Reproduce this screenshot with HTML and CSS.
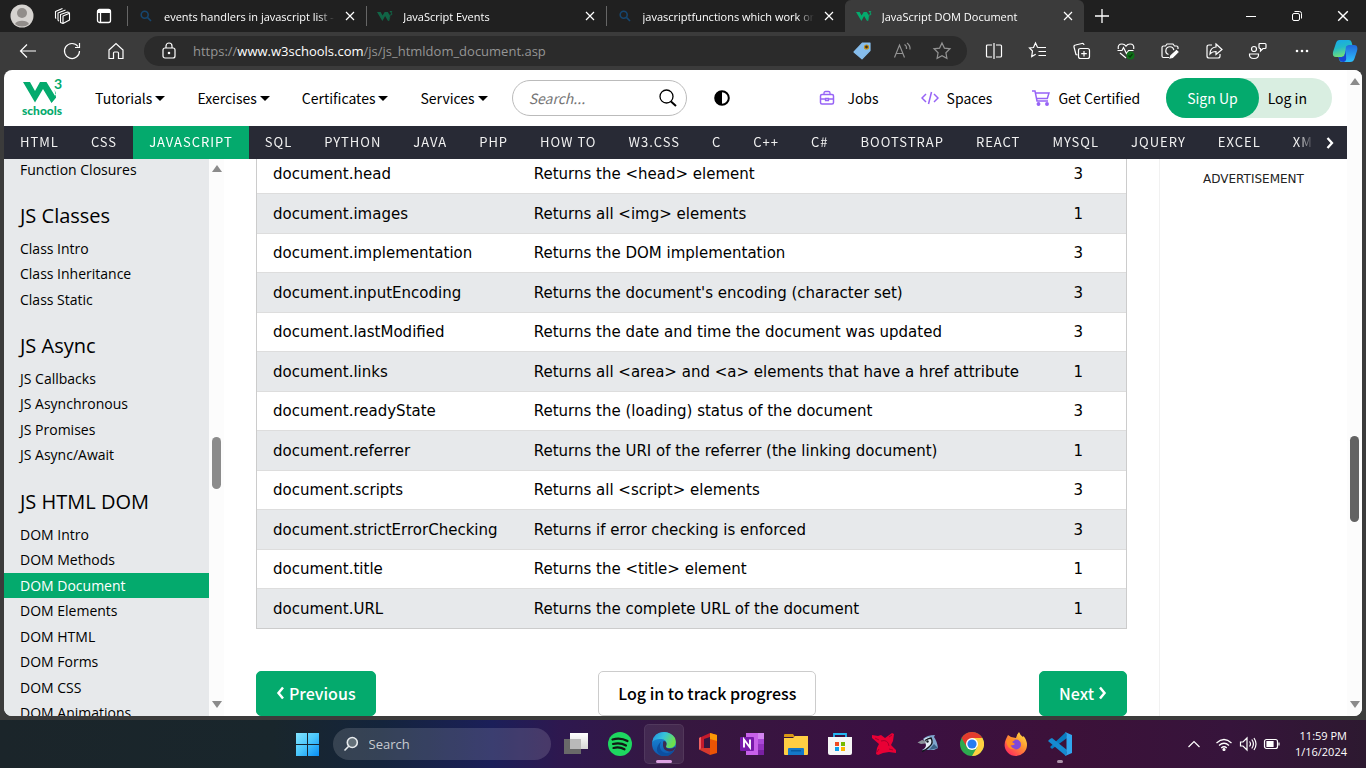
FILE: index.html
```html
<!DOCTYPE html>
<html lang="en">
<head>
<meta charset="utf-8">
<title>JavaScript DOM Document</title>
<link rel="stylesheet" href="styles.css">
</head>
<body>
<svg class="defs" aria-hidden="true">
  <symbol id="w3" viewBox="0 0 16 12"><path d="M0 2h3.600l2 3.600L7.700 2h3.100l2.400 3.900-2.300 4.800-2.800-4.600-2.700 4.900zM10.900 10.700l2.700-4.600-1.500 4.900z"/><path d="M12.800 1.500h2l-1 1.500q1.500.3 1 1.500-.8 1-2 .3" fill="none" stroke="currentColor"/></symbol>
  <symbol id="lens" viewBox="0 0 12 12"><g fill="none" stroke="currentColor" stroke-width="1.600"><circle cx="4.700" cy="4.700" r="3.500"/><path d="M7.400 7.400 11 11"/></g></symbol>
  <symbol id="x" viewBox="0 0 10 10"><path d="M1 1l8 8M9 1 1 9" fill="none" stroke="currentColor" stroke-width="1.200"/></symbol>
</svg>

<header class="tabbar">
  <div class="tab-tools">
    <button class="avatar" aria-label="Profile"><svg width="24" height="24" viewBox="0 0 24 24"><circle cx="12" cy="12" r="11.500" fill="#d6d3d0"/><circle cx="12" cy="9" r="5" fill="#918d8a"/><path d="M5 20a7.500 5 0 0 1 14 0 11 11 0 0 1-14 0z" fill="#918d8a"/></svg></button>
    <button aria-label="Workspaces"><svg width="18" height="18" viewBox="0 0 18 18" fill="none" stroke="#fff" stroke-width="1.100" stroke-linejoin="round"><path d="M6.500 7.500 13.500 5q2 0 2 1.500v6.500L9 16.500l-2.500-1zM9 16.500V9l6.500-2.700M4 13.500V6l7.500-3M4 13.500l1 .5M1.500 11V4.500L8.500 1.500M1.500 11l.7.500"/></svg></button>
    <button aria-label="Tab actions"><svg width="16" height="16" viewBox="0 0 16 16" fill="none" stroke="#fff" stroke-width="1.300"><rect x="1.500" y="1.500" width="13" height="13" rx="2"/><path d="M1.500 3.500h13" stroke-width="3"/><path d="M4.500 4v10.500"/></svg></button>
  </div>
  <nav class="tabs" aria-label="Open tabs">
    <div class="tab"><svg class="fav lens"><use href="#lens"/></svg><a href="#">events handlers in javascript list - Search</a><button aria-label="Close tab"><svg><use href="#x"/></svg></button></div>
    <div class="tab"><svg class="fav dim"><use href="#w3"/></svg><a href="#">JavaScript Events</a><button aria-label="Close tab"><svg><use href="#x"/></svg></button></div>
    <div class="tab"><svg class="fav lens"><use href="#lens"/></svg><a href="#">javascriptfunctions which work on document</a><button aria-label="Close tab"><svg><use href="#x"/></svg></button></div>
    <div class="tab active"><svg class="fav"><use href="#w3"/></svg><a href="#">JavaScript DOM Document</a><button aria-label="Close tab"><svg><use href="#x"/></svg></button></div>
  </nav>
  <button class="new-tab" aria-label="New tab"><svg width="16" height="16" viewBox="0 0 16 16"><path d="M8 1v14M1 8h14" stroke="#fff" stroke-width="1.300"/></svg></button>
  <div class="window-buttons">
    <button aria-label="Minimize"><svg width="12" height="12" viewBox="0 0 12 12"><path d="M1 6.500h10" stroke="#fff"/></svg></button>
    <button aria-label="Restore"><svg width="12" height="12" viewBox="0 0 12 12" fill="none" stroke="#fff"><rect x="1.500" y="3.500" width="7" height="7" rx="1.500"/><path d="M3.500 1.500h5a2 2 0 0 1 2 2v5"/></svg></button>
    <button aria-label="Close"><svg width="12" height="12"><use href="#x"/></svg></button>
  </div>
</header>

<div class="toolbar">
  <div class="nav-buttons">
    <button aria-label="Back"><svg viewBox="0 0 20 20"><path d="M18 10H3M9 3.500 2.500 10 9 16.500"/></svg></button>
    <button aria-label="Refresh"><svg viewBox="0 0 20 20"><path d="M16 5.500A7.500 7.500 0 1 0 17.500 10M17.500 2v4.500H13"/></svg></button>
    <button aria-label="Home"><svg viewBox="0 0 20 20"><path d="M3 9l7-6.500L17 9v8.500h-4.500V12a1 1 0 0 0-1-1h-3a1 1 0 0 0-1 1v5.500H3z"/></svg></button>
  </div>
  <div class="address">
    <button aria-label="Site information"><svg viewBox="0 0 20 20"><rect x="4" y="7" width="12" height="10" rx="2"/><path d="M7 7V5a3 3 0 0 1 6 0v2"/><circle cx="10" cy="12" r=".7" fill="#fff"/></svg></button>
    <div class="url" role="textbox" aria-label="Address">https://<b>www.w3schools.com</b>/js/js_htmldom_document.asp</div>
    <button aria-label="Shopping"><svg viewBox="0 0 20 20"><path d="M10.500 2H18v7.500l-8 8.300L2 11z" fill="#86bdec" stroke="#86bdec" stroke-linejoin="round"/><circle cx="14.500" cy="6" r="2" fill="#3c3220" stroke="#c79012" stroke-width="1.200"/></svg></button>
    <button class="muted" aria-label="Read aloud"><svg viewBox="0 0 20 20"><path d="M2.500 16.500 7.500 4l5 12.500M4.300 12.500h6.500M12.500 3.500q2.500 1.500 2 4.500M15 2q3.500 2.500 3 6.500"/></svg></button>
    <button class="muted" aria-label="Favorite"><svg viewBox="0 0 20 20"><path d="m10 2 2.400 5.100 5.600.7-4.100 3.900 1 5.600L10 14.600l-4.900 2.700 1-5.600L2 7.800l5.600-.7z"/></svg></button>
  </div>
  <div class="extras">
    <button aria-label="Split screen"><svg viewBox="0 0 20 20"><path d="M8 4H3.500Q2.500 4 2.500 5v10q0 1 1 1H8M12 4h4.500q1 0 1 1v10q0 1-1 1H12M10 2v16"/></svg></button>
    <button aria-label="Favorites"><svg viewBox="0 0 20 20"><path d="m11 6.500-1.500-.2L7.500 2 5.500 6.500 1.500 7l3 3-.8 5.500 4-2.300M11 6.500h7M10.500 10.500H18M10.500 14.500H18"/></svg></button>
    <button aria-label="Collections"><svg viewBox="0 0 20 20"><path d="M5.500 14 4 13.500 2 6q-.3-1.700 1.500-2l6.500-1.500q1.700-.3 2 1.500M8.500 7.500h7q2 0 2 2v6q0 2-2 2h-7q-2 0-2-2v-6q0-2 2-2zM12 10v5.500M9.200 12.700h5.600"/></svg></button>
    <button aria-label="Browser essentials"><svg viewBox="0 0 20 20"><path d="M2.300 8Q1.500 3 6 3q2.500 0 4 2.200Q11.500 3 14 3q4.500 0 3.700 5M1.500 9.500H6l1.500-3 3 6 2-3h5M4 12l6 5"/><circle cx="14.500" cy="14.500" r="4" fill="#10701a" stroke="none"/><path d="m12.500 14.500 1.500 1.500 2.500-3" stroke="#063b0a"/></svg></button>
    <button aria-label="Screenshot"><svg viewBox="0 0 20 20"><path d="M9 16.500H3.500q-1.500 0-1.500-1.500V6.500Q2 5 3.500 5h2L7 3h6l1.500 2h2Q18 5 18 6.500V8M8.500 13.500a4 4 0 1 1 5.300-4.300"/><path d="m10 17 1-2.500 5.500-5 1.500 1.500-5.500 5.500z" fill="#fff"/></svg></button>
    <button aria-label="Share"><svg viewBox="0 0 20 20"><path d="M8 4H5Q3 4 3 6v9q0 2 2 2h9q2 0 2-2v-2M12 3l6 5.500-6 5V10.500q-4 0-6 2.500 0-6.500 6-7z"/></svg></button>
    <button aria-label="Feedback"><svg viewBox="0 0 20 20"><circle cx="6" cy="8" r="2.500"/><path d="M1.500 13h9q.5 4.500-4.500 4.500T1.500 13zM11 3.500Q11 2.500 12 2.500h5q1 0 1 1v3q0 1-1 1h-2L12.500 10V7.500q-1.500 0-1.500-1z"/></svg></button>
    <button aria-label="More"><svg viewBox="0 0 20 20"><g fill="#fff" stroke="none"><circle cx="5" cy="10" r="1.300"/><circle cx="10" cy="10" r="1.300"/><circle cx="15" cy="10" r="1.300"/></g></svg></button>
  </div>
  <button class="copilot" aria-label="Copilot"><svg width="26" height="26" viewBox="0 0 26 26"><defs><linearGradient id="cp1" x2=".3" y2="1"><stop stop-color="#18a6ec"/><stop offset=".5" stop-color="#22b9c9"/><stop offset="1" stop-color="#71df78"/></linearGradient><linearGradient id="cp2" x2="0" y2="1"><stop stop-color="#2069dd"/><stop offset="1" stop-color="#2ec0fa"/></linearGradient></defs><path d="M7.500 2H17q2 0 2.500 2l1 3.500h-3q-2 0-2.600 2L12.500 17q-.8 2-3 2H4q-4 0-3-5L4 5q1-3 3.500-3z" fill="url(#cp1)"/><path d="M14 8.500q1-1.500 3.500-1.500H22q4.500 0 3 6l-2.500 7.500Q21.500 24 18 24H10q-2 0-2.700-2L6.500 19H10q2 0 2.600-2z" fill="url(#cp2)"/><path d="M6.500 19H10q2 0 2.600-2l1.200-4 .4 8q-.4 3-3 3-2.500 0-3.800-2z" fill="#1746d1"/></svg></button>
</div>

<div class="window">
  <div class="page">
    <header class="site-header">
      <a class="logo" href="#" aria-label="W3Schools home"><svg width="42" height="40" viewBox="0 0 42 40" fill="#04aa6d"><path d="M1 4h7l5 9 5-9h6.500L34 19.500 29.500 25 21 11l-8 13.500z"/><path d="M29 25l5-9.500-1.500-4L34 19.500z"/><text class="logo-three" x="32" y="11">3</text><text class="logo-word" x="0" y="37">schools</text></svg></a>
      <nav class="main-nav" aria-label="Main">
        <a class="drop" href="#">Tutorials</a><a class="drop" href="#">Exercises</a><a class="drop" href="#">Certificates</a><a class="drop" href="#">Services</a>
      </nav>
      <form class="search"><input type="text" placeholder="Search..." aria-label="Search"><button type="button" aria-label="Search"><svg width="18" height="18" viewBox="0 0 18 18" fill="none" stroke="#000"><circle cx="7.500" cy="7.500" r="6.500" stroke-width="1.300"/><path d="M12 12.500 17 17" stroke-width="2"/></svg></button></form>
      <button class="contrast" aria-label="Dark mode"><svg width="16" height="16" viewBox="0 0 16 16"><circle cx="8" cy="8" r="6.800" fill="#fff" stroke="#000" stroke-width="2"/><path d="M8 1a7 7 0 0 0 0 14z"/></svg></button>
      <nav class="side-nav" aria-label="Services">
        <a class="jobs" href="#"><svg width="16" height="16" viewBox="0 0 16 16"><rect x="1.500" y="4.500" width="13" height="9.500" rx="1.500"/><path d="M5 4.500V3q0-1.500 1.500-1.500h3Q11 1.500 11 3v1.500M1.500 9H6M10 9h4.500M6.500 8.500h3v2h-3z" stroke-width="1.300"/></svg>Jobs</a>
        <a href="#"><svg width="18" height="16" viewBox="0 0 18 16"><path d="M5 4 1 8l4 4M13 4l4 4-4 4M10.500 2l-3 12"/></svg>Spaces</a>
        <a href="#"><svg width="18" height="16" viewBox="0 0 18 16"><path d="M0 1h3l2 10h11M3.500 3H17l-1.700 5.500H4.700"/><circle cx="6.500" cy="14" r="1.200" fill="#9763f6"/><circle cx="15" cy="14" r="1.200" fill="#9763f6"/></svg>Get Certified</a>
      </nav>
      <div class="account"><a class="signup" href="#">Sign Up</a><a class="login" href="#">Log in</a></div>
    </header>

    <nav class="topics" aria-label="Topics">
      <div class="topic-list"><a href="#">HTML</a><a href="#">CSS</a><a class="current" href="#">JAVASCRIPT</a><a href="#">SQL</a><a href="#">PYTHON</a><a href="#">JAVA</a><a href="#">PHP</a><a href="#">HOW TO</a><a href="#">W3.CSS</a><a href="#">C</a><a href="#">C++</a><a href="#">C#</a><a href="#">BOOTSTRAP</a><a href="#">REACT</a><a href="#">MYSQL</a><a href="#">JQUERY</a><a href="#">EXCEL</a><a href="#">XML</a></div>
      <button aria-label="Scroll right"><svg width="9" height="12" viewBox="0 0 9 12" fill="none" stroke="#fff" stroke-width="2.300"><path d="m1.500 1 4.500 5-4.500 5"/></svg></button>
    </nav>

    <div class="content">
      <aside class="sidebar">
        <ul><li><a href="#">Function Closures</a></li></ul>
        <h2>JS Classes</h2>
        <ul><li><a href="#">Class Intro</a></li><li><a href="#">Class Inheritance</a></li><li><a href="#">Class Static</a></li></ul>
        <h2>JS Async</h2>
        <ul><li><a href="#">JS Callbacks</a></li><li><a href="#">JS Asynchronous</a></li><li><a href="#">JS Promises</a></li><li><a href="#">JS Async/Await</a></li></ul>
        <h2>JS HTML DOM</h2>
        <ul><li><a href="#">DOM Intro</a></li><li><a href="#">DOM Methods</a></li><li class="current"><a href="#">DOM Document</a></li><li><a href="#">DOM Elements</a></li><li><a href="#">DOM HTML</a></li><li><a href="#">DOM Forms</a></li><li><a href="#">DOM CSS</a></li><li><a href="#">DOM Animations</a></li></ul>
      </aside>
      <div class="scrollbar side" aria-hidden="true"><i class="up"></i><div class="track"><i class="thumb"></i></div><i class="down"></i></div>
      <main>
        <table>
          <tbody>
            <tr><td>document.head</td><td>Returns the &lt;head&gt; element</td><td>3</td></tr>
            <tr><td>document.images</td><td>Returns all &lt;img&gt; elements</td><td>1</td></tr>
            <tr><td>document.implementation</td><td>Returns the DOM implementation</td><td>3</td></tr>
            <tr><td>document.inputEncoding</td><td>Returns the document's encoding (character set)</td><td>3</td></tr>
            <tr><td>document.lastModified</td><td>Returns the date and time the document was updated</td><td>3</td></tr>
            <tr><td>document.links</td><td>Returns all &lt;area&gt; and &lt;a&gt; elements that have a href attribute</td><td>1</td></tr>
            <tr><td>document.readyState</td><td>Returns the (loading) status of the document</td><td>3</td></tr>
            <tr><td>document.referrer</td><td>Returns the URI of the referrer (the linking document)</td><td>1</td></tr>
            <tr><td>document.scripts</td><td>Returns all &lt;script&gt; elements</td><td>3</td></tr>
            <tr><td>document.strictErrorChecking</td><td>Returns if error checking is enforced</td><td>3</td></tr>
            <tr><td>document.title</td><td>Returns the &lt;title&gt; element</td><td>1</td></tr>
            <tr><td>document.URL</td><td>Returns the complete URL of the document</td><td>1</td></tr>
          </tbody>
        </table>
        <div class="pager">
          <a class="green" href="#"><svg width="9" height="14" viewBox="0 0 9 14"><path d="M7 1.500 2.500 7 7 12.500"/></svg>Previous</a>
          <a href="#">Log in to track progress</a>
          <a class="green" href="#">Next<svg width="9" height="14" viewBox="0 0 9 14"><path d="M2 1.500 6.500 7 2 12.500"/></svg></a>
        </div>
      </main>
      <aside class="ads">ADVERTISEMENT</aside>
    </div>
  </div>
  <div class="scrollbar" aria-hidden="true"><i class="up"></i><div class="track"><i class="thumb"></i></div><i class="down"></i></div>
</div>

<footer class="taskbar">
  <div class="apps">
    <button aria-label="Start"><svg width="24" height="24" viewBox="0 0 24 24"><defs><linearGradient id="win" x2="1" y2="1"><stop stop-color="#83e4ff"/><stop offset=".5" stop-color="#49c6fc"/><stop offset="1" stop-color="#078df5"/></linearGradient></defs><path d="M1 1h11v11H1zM13 1h11v11H13zM1 13h11v11H1zM13 13h11v11H13z" fill="url(#win)"/></svg></button>
    <label class="find"><svg width="16" height="16" viewBox="0 0 16 16" fill="#647079" stroke="#e8ebee" stroke-width="1.600"><circle cx="9.300" cy="6.500" r="5"/><path d="M5.700 10.200 1.500 14.500"/></svg><input type="text" placeholder="Search" aria-label="Search Windows"></label>
    <button aria-label="Task view"><svg width="24" height="24" viewBox="0 0 24 24"><defs><linearGradient id="tv" y2="1" x2="0"><stop stop-color="#fff"/><stop offset="1" stop-color="#d6d6d6"/></linearGradient></defs><path d="M0 7h17v15H0z" fill="#696969"/><path d="M6 1h18v16H6z" fill="url(#tv)"/><path d="M6 7h11v10H6z" fill="#b9b9b9"/></svg></button>
    <button aria-label="Spotify"><svg width="24" height="24" viewBox="0 0 24 24"><circle cx="12" cy="12" r="12" fill="#1ed760"/><path d="M4.500 7.500q8-2.300 15 1.500M5 12q7-2 13 1.500M5.500 16q6-1.500 11 1.300" fill="none" stroke="#101914" stroke-width="2.200" stroke-linecap="round"/></svg></button>
    <button class="open" aria-label="Edge"><svg width="24" height="24" viewBox="0 0 24 24"><defs><linearGradient id="e1" x2="1" y2=".4"><stop stop-color="#218de0"/><stop offset=".5" stop-color="#36c3d9"/><stop offset="1" stop-color="#6ee04c"/></linearGradient><linearGradient id="e2" x2="0" y2="1"><stop stop-color="#1a8fdd"/><stop offset="1" stop-color="#0f57ac"/></linearGradient></defs><circle cx="12" cy="12" r="12" fill="url(#e2)"/><path d="M.300 10Q2 0 12 0q7.500.3 11 6 2 6-1 8.500-2 2-6 1.500-3-.5-2-2.500Q16 8 9.500 7 3 6.500.3 10z" fill="url(#e1)"/><path d="M9 9.500q-3 7 2 10.500 5 3 11.500-2-4.500 8-13 5.700Q.5 19 9 9.500z" fill="#0c4f9f"/><path d="M11.500 9q3.500 0 3 4-1.500 2.500 1.500 3.500 4 1 7-1.500l.4.8q-2 4.200-6.400 3.700-7-1-6-8.500z" fill="#3c2b52"/></svg></button>
    <button aria-label="Office"><svg width="24" height="24" viewBox="0 0 24 24"><path d="M3 6 14 1v4L8 7v9l-5 2z" fill="#c51a2b"/><path d="M14 1l7 2v18l-7 2z" fill="#eb5405"/><path d="M14 1l7 2v6l-7-2z" fill="#fb9706"/><path d="M3 17.500 6 16h8v7z" fill="#d7392d"/><path d="M3 6l2-1v11.500l-2 1z" fill="#ee6263"/></svg></button>
    <button aria-label="OneNote"><svg width="24" height="24" viewBox="0 0 24 24"><path d="M6 1h18v22H6z" fill="#c761e9"/><path d="M18 1h6v6h-6z" fill="#d283f0"/><path d="M18 7h6v5h-6z" fill="#aa48d8"/><path d="M18 12h6v6h-6z" fill="#9332bf"/><path d="M18 18h6v5h-6z" fill="#7a21a4"/><rect y="5" width="14" height="14" rx="1" fill="#7719aa"/><path d="M4 15.500v-8l6 8v-8" fill="none" stroke="#fff" stroke-width="1.900"/></svg></button>
    <button aria-label="File Explorer"><svg width="26" height="24" viewBox="0 0 26 24"><path d="M1 3q0-1 1-1h8l2 3H1z" fill="#d99714"/><path d="M1 6h9l2-2h13v18q0 1-1 1H2q-1 0-1-1z" fill="#ffce43"/><path d="M5 17q0-1 1-1h14q1 0 1 1v6H5z" fill="#1478c9"/><path d="M8 18h10v1.500H8z" fill="#075ba2"/></svg></button>
    <button aria-label="Microsoft Store"><svg width="24" height="24" viewBox="0 0 24 24"><path d="M6 6V2h12v4" fill="none" stroke="#24b7f2" stroke-width="1.800"/><path d="M0 5h24v16q0 2-2 2H2q-2 0-2-2z" fill="#f6f6f6"/><path d="M7 10h4v4H7z" fill="#ef4a20"/><path d="M13 10h4v4h-4z" fill="#75b900"/><path d="M7 15h4v4H7z" fill="#0b9fe9"/><path d="M13 15h4v4h-4z" fill="#fdb600"/></svg></button>
    <button aria-label="Red star"><svg width="24" height="24" viewBox="0 0 24 24"><path d="m0 3 6 1 3-1 4 3 7-5 2 1-1 7-2 4 5 5v3l-7-1-6 1-5 2-2-1 1-6 2-4-7-6z" fill="#e90035"/><path d="m3 6 4 2M17 5l3-2M7 17l-2 3M17 17l4 1M9 9q7-2 8 5" stroke="#a4002d" fill="none"/></svg></button>
    <button aria-label="Blue jay"><svg width="24" height="24" viewBox="0 0 24 24"><path d="M7 7q4-4 12-4l-1 2q3 4 4 11l-4 2H6l6-4z" fill="#7fa6cd"/><path d="M8 7q4-3 8-1 2 5-2 9-3 3-8 4 4-3 4-6z" fill="#e4edf5"/><path d="M1.500 10.500 6 8l4 1-1 2.500-4 .5z" fill="#8b929a"/><path d="M9 8.500q3-2 6-2.500 3 5-2 9-3 3-7 4.500" fill="none" stroke="#121820" stroke-width="1.500"/><circle cx="11.500" cy="9.500" r="1.200" fill="#121820"/><path d="m18 12 4 4-9 2z" fill="#3c6387"/></svg></button>
    <button aria-label="Chrome"><svg width="24" height="24" viewBox="0 0 24 24"><circle cx="12" cy="12" r="12" fill="#2da94f"/><path d="M1.600 6A12 12 0 0 1 22.400 6H12L6.800 15z" fill="#e33b2e"/><path d="M22.400 6A12 12 0 0 1 12 24l5.200-9L12 6z" fill="#ffd041"/><circle cx="12" cy="12" r="6" fill="#fff"/><circle cx="12" cy="12" r="4.600" fill="#267cf0"/></svg></button>
    <button aria-label="Firefox"><svg width="24" height="24" viewBox="0 0 24 24"><defs><linearGradient id="ff" x1="1" x2=".2" y2="1"><stop stop-color="#fff04a"/><stop offset=".45" stop-color="#ff9730"/><stop offset="1" stop-color="#ff265f"/></linearGradient></defs><path d="M2 7 4 3l3 2 5 1q1-4 3-6 1 3 4 5l.5-1Q23 8 23 13a11.200 11 0 0 1-22.400 0q0-3 1.400-6z" fill="url(#ff)"/><circle cx="12" cy="12.500" r="5" fill="#8148d8"/><path d="M2 8q5-3 9 0l-3 2 3 2q-2 2-5 1 2 4 6 4-9 2-10-9z" fill="#ff8b25"/></svg></button>
    <button class="running" aria-label="Visual Studio Code"><svg width="24" height="24" viewBox="0 0 24 24"><path d="m18 0-16 15 2 2L19 6z" fill="#087cc1"/><path d="m2 7 2-1 15 12-1 6L0 9z" fill="#168bd1"/><path d="m17 0 7 3v18l-7 3q1.500-1 1.500-3V3Q18.500 1 17 0z" fill="#31a6ee"/></svg></button>
  </div>
  <div class="tray">
    <button aria-label="Hidden icons"><svg width="14" height="14" viewBox="0 0 14 14"><path d="m1.500 10 5.500-5.500 5.500 5.500"/></svg></button>
    <button class="status" aria-label="Network, volume, battery">
      <svg width="18" height="16" viewBox="0 0 18 16"><path d="M1.500 7q7.500-7 15 0M4 9.500q5-4.500 10 0M6.200 12q2.800-2.500 5.600 0"/><circle cx="9" cy="13.500" r="1" fill="#fff"/></svg>
      <svg width="18" height="16" viewBox="0 0 18 16"><path d="M1.500 6h2.500l4-4v12l-4-4H1.500zM10.500 5.500q2 2.500 0 5M12.800 3.500q3.200 4.500 0 9M15 2q4 6 0 12"/></svg>
      <svg width="18" height="16" viewBox="0 0 18 16"><rect x="1.500" y="3.500" width="13" height="9" rx="2"/><path d="M4 5.500h6v5H4z" fill="#fff"/><path d="M16 6.500v3"/></svg>
    </button>
    <time datetime="2024-01-16T23:59">11:59 PM<br>1/16/2024</time>
  </div>
</footer>
</body>
</html>
```
FILE: styles.css
```css
* { box-sizing: border-box; }
body { margin: 0; height: 100vh; display: flex; flex-direction: column; overflow: hidden; background: #3b3b3b; color: #000; font-family: "Open Sans", "Noto Sans", sans-serif; }
a { color: inherit; text-decoration: none; }
button { display: flex; align-items: center; justify-content: center; padding: 0; border: 0; background: none; color: inherit; font: inherit; flex: none; }
svg { display: block; flex: none; }
input { font: inherit; color: inherit; min-width: 0; border: 0; outline: 0; background: none; }
.defs { position: absolute; width: 0; height: 0; }

/* Browser tabs */
.tabbar { flex: none; height: 32px; display: flex; background: #202020; color: #fff; font-size: 11px; }
.tab-tools { display: flex; align-items: center; gap: 20px; padding-left: 10px; width: 127px; }
.tab-tools button:last-child { margin-left: 4px; }
.tabs { display: flex; flex: 0 1 957px; min-width: 0; }
.tab { flex: 1; min-width: 0; display: flex; align-items: center; gap: 10px; padding: 0 11px 0 10px; border-left: 1px solid #5c5c5c; border-image: linear-gradient(#202020 20%, #666 20%, #666 80%, #202020 80%) 1; }
.tab.active { background: #3b3b3b; border-image: none; border-left-color: #3b3b3b; border-radius: 6px 6px 0 0; }
.tab a { flex: 1; overflow: hidden; white-space: nowrap; mask-image: linear-gradient(to right, #000 90%, transparent); }
.tab button svg { width: 10px; height: 10px; }
.fav { width: 16px; height: 16px; fill: #04aa6d; color: #04aa6d; }
.fav.dim { opacity: .5; }
.fav.lens { padding: 2px; color: #16466f; }
.new-tab { width: 36px; }
.window-buttons { display: flex; margin-left: auto; }
.window-buttons button { width: 46px; }

/* Browser toolbar */
.toolbar { flex: none; height: 38px; display: flex; align-items: center; color: #fff; padding-right: 8px; }
.toolbar svg { width: 20px; height: 20px; fill: none; stroke: #fff; stroke-width: 1.200; }
.nav-buttons { display: flex; gap: 24px; padding: 0 18px; }
.address { flex: 1; min-width: 0; height: 30px; display: flex; align-items: center; gap: 20px; padding: 0 15px; border-radius: 15px; background: #2b2b2b; }
.url { flex: 1; margin-left: -6px; overflow: hidden; white-space: nowrap; color: #959595; font-size: 13px; }
.url b { font-weight: 400; color: #fff; }
.toolbar .muted svg { stroke: #929292; }
.extras { display: flex; gap: 24px; padding: 0 20px 0 17px; }
.toolbar .copilot svg { width: 26px; height: 26px; stroke: none; }

/* Web page */
.window { flex: 1; min-height: 0; display: flex; margin: 0 4px 4px; overflow: hidden; border-radius: 8px; background: #fff; }
.page { flex: 1; min-width: 0; display: flex; flex-direction: column; }
.site-header { flex: none; height: 56px; display: flex; align-items: center; padding: 0 15px 0 18px; font: 14px "Noto Sans CJK SC", sans-serif; }
.logo { margin-right: 31px; }
.logo svg { overflow: visible; }
.logo-three { font: 700 14px Lato, sans-serif; }
.logo-word { font: 900 12px Lato, sans-serif; }
.main-nav { display: flex; gap: 32px; }
.drop { display: flex; align-items: center; gap: 3px; }
.drop::after { content: ""; border: 5px solid transparent; border-top-color: #000; border-bottom: 0; }
.search { width: 175px; height: 36px; display: flex; align-items: center; margin-left: 24px; padding: 0 9px 0 16px; border: 1px solid #bbb; border-radius: 18px; }
.search input { flex: 1; padding: 0; font-style: italic; }
.search input::placeholder { color: #757575; }
.contrast { margin-left: 27px; }
.side-nav { display: flex; gap: 40px; margin-left: auto; }
.side-nav a { display: flex; align-items: center; gap: 8px; }
.side-nav .jobs { gap: 12px; margin-right: 2px; }
.side-nav svg { fill: none; stroke: #9763f6; stroke-width: 1.500; }
.account { display: flex; align-items: center; height: 40px; margin-left: 26px; border-radius: 20px; background: #d9eee1; }
.signup { display: flex; align-items: center; height: 40px; padding: 0 21px; border-radius: 20px; background: #04aa6d; color: #fff; }
.login { padding: 0 25px 0 9px; }

.topics { flex: none; height: 33px; display: flex; background: #282a35; color: #f1f1f1; font: 13px "Noto Sans CJK SC", sans-serif; letter-spacing: 1px; }
.topic-list { flex: 1; min-width: 0; display: flex; overflow: hidden; mask-image: linear-gradient(to right, #000 calc(100% - 16px), transparent); }
.topic-list a { flex: none; display: flex; align-items: center; padding: 0 16px 2px; }
.topics .current { background: #04aa6d; color: #fff; }
.topics button { width: 33px; }

.content { flex: 1; min-height: 0; display: flex; overflow: hidden; }
.sidebar { flex: none; width: 205px; overflow: hidden; background: #e7e9eb; font-size: 14px; }
.sidebar ul { list-style: none; margin: 0; padding: 0; }
.sidebar > ul:first-child { margin-top: -2px; }
.sidebar li { height: 25px; line-height: 25px; padding-left: 16px; }
.sidebar li:nth-child(even) { height: 26px; }
.sidebar .current { background: #04aa6d; color: #fff; }
.sidebar h2 { margin: 19px 0 5px; padding-left: 16px; font-size: 20px; line-height: 30px; font-weight: 400; }

.scrollbar { flex: none; width: 15px; display: flex; flex-direction: column; align-items: center; padding: 8px 0; background: #fcfcfc; }
.scrollbar.side { padding-top: 6px; }
.up, .down { border: 5px solid transparent; }
.up { border-top: 0; border-bottom: 7px solid #8b8b8b; }
.down { border-bottom: 0; border-top: 7px solid #8b8b8b; }
.track { flex: 1; width: 9px; display: flex; flex-direction: column; }
.thumb { height: 14%; border-radius: 5px; background: #636363; }
.track::before { content: ""; height: 57%; }
.side .thumb { height: 10%; background: #8b8b8b; }
.side .track::before { height: 50%; }

main { flex: 1; min-width: 0; padding: 0 32px; }
table { width: 100%; margin-top: -5px; border: 1px solid #ccc; border-collapse: separate; border-spacing: 0; table-layout: fixed; font: 15px "DejaVu Sans", Verdana, sans-serif; }
td { height: 39px; padding: 0 16px; border-bottom: 1px solid #ddd; white-space: nowrap; }
tr:nth-child(even) td { height: 40px; background: #e7e9eb; }
tr:last-child td { border-bottom: 0; height: 39px; }
td:first-child { width: 30%; }
td:last-child { width: 11%; text-align: center; }
.pager { display: flex; justify-content: space-between; margin-top: 42px; }
.pager a { display: flex; align-items: center; justify-content: center; gap: 4px; height: 45px; padding: 0 19px 2px; border: 1px solid #ccc; border-radius: 5px; font: 500 16px "Noto Sans CJK SC", sans-serif; }
.pager .green { border-color: #04aa6d; background: #04aa6d; color: #fff; }
.pager svg { fill: none; stroke: #fff; stroke-width: 2.500; }
.ads { flex: none; width: 188px; border-left: 1px solid #f1f1f1; padding-top: 12px; text-align: center; font: 12px/16px "DejaVu Sans", Verdana, sans-serif; color: #222; }

/* Desktop taskbar */
.taskbar { flex: none; height: 48px; display: grid; grid-template-columns: 1fr auto 1fr; align-items: center; color: #fff; background: linear-gradient(90deg, #1b252a, #19262c 20%, #14243c 28%, #1b1f59 36%, #2e184f 41%, #36173f 50%, #3b1042 65%, #3c1139 78%, #36143b 90%, #2d1930); }
.apps { grid-column: 2; display: flex; align-items: center; }
.apps button { position: relative; width: 44px; height: 40px; }
.find { display: flex; align-items: center; gap: 10px; width: 218px; height: 32px; margin: 0 3px 0 4px; padding: 0 10px; border-radius: 16px; background: #ffffff24; font-size: 13px; }
.find input { flex: 1; padding: 0; }
.find input::placeholder { color: #c7cbd1; }
.apps .open { width: 40px; margin: 0 2px; box-shadow: inset 0 0 0 1px #ffffff12; background: #ffffff14; border-radius: 5px; }
.open::after, .running::after { content: ""; position: absolute; bottom: 1px; left: 12px; width: 16px; height: 3px; border-radius: 2px; background: #dda2e3; }
.running::after { left: 19px; width: 6px; background: #aa91a8; }
.tray { grid-column: 3; justify-self: end; display: flex; align-items: center; gap: 14px; padding-right: 19px; font-size: 11px; line-height: 16px; text-align: right; }
.tray svg { fill: none; stroke: #fff; stroke-width: 1.200; }
.status { gap: 6px; }
```
